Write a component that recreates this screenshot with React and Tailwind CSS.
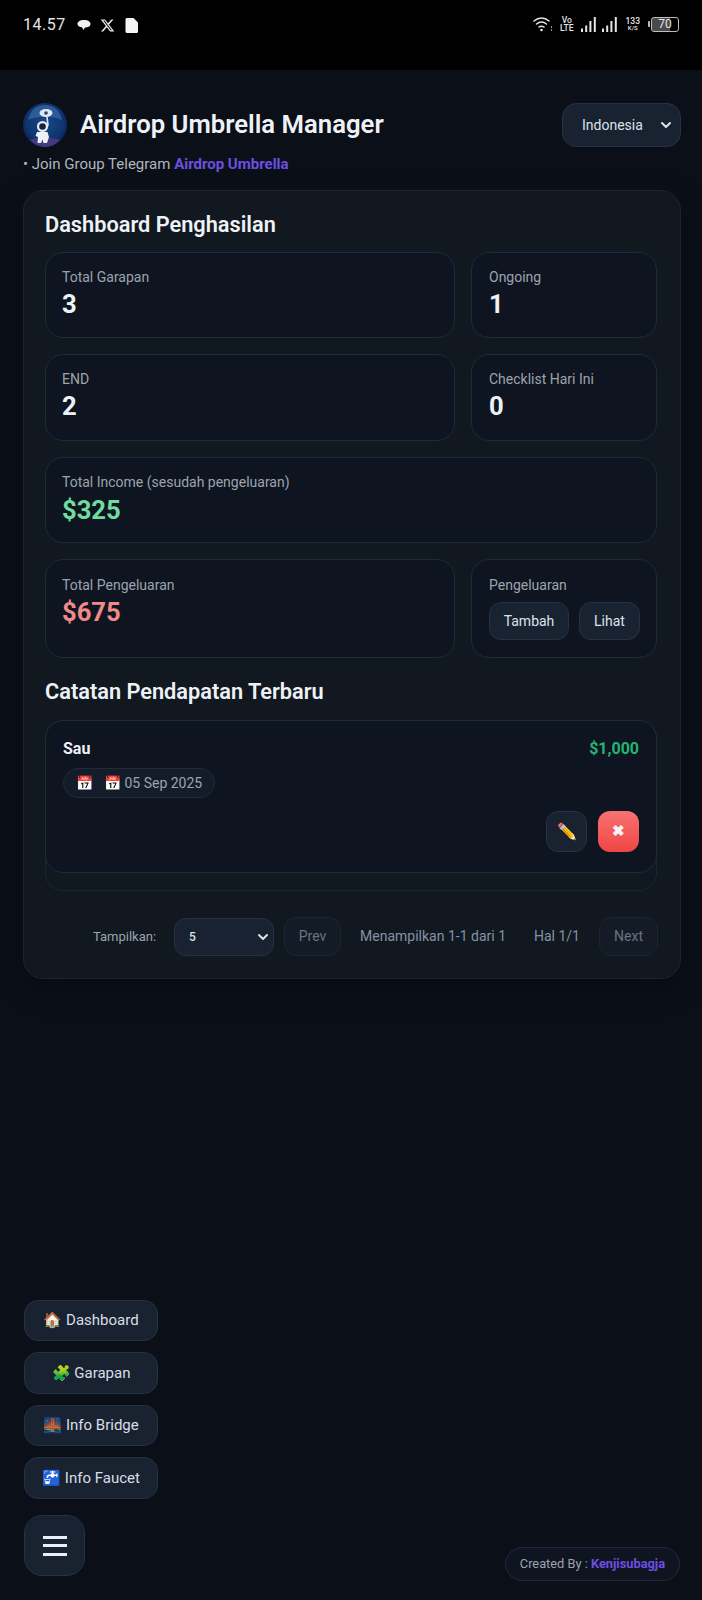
import { ChevronDown } from 'lucide-react';
import { FaXTwitter } from 'react-icons/fa6';

function StatCard({ label, value, color = 'text-[#eef2f7]', pad = 'pt-[14px]', className = '' }) {
    return (
        <div className={`rounded-[18px] border border-[#1f2a3a] bg-[#0f1520] px-[16px] ${pad} ${className}`}>
            <div className="text-[14px] leading-[20px] text-[#9ca3af]">{label}</div>
            <div className={`text-[25.6px] leading-[34px] font-bold ${color}`}>{value}</div>
        </div>
    );
}

function Wifi() {
    return (
        <svg width="20" height="16" viewBox="0 0 20 16" fill="none" stroke="#e5e5e5" strokeWidth="1.5" strokeLinecap="round">
            <path d="M1 5C5.500 1 11.500 1 16 5" />
            <path d="M3.500 8C6.500 5.600 10.500 5.600 13.500 8" />
            <path d="M6 11C7.500 10 9.500 10 11 11" />
            <circle cx="8.500" cy="14" r="1.300" fill="#e5e5e5" stroke="none" />
            <circle cx="18.500" cy="11" r="0.700" fill="#e5e5e5" stroke="none" />
            <circle cx="18.500" cy="14" r="0.700" fill="#e5e5e5" stroke="none" />
        </svg>
    );
}

function Signal({ className = '' }) {
    return (
        <svg width="15" height="15" viewBox="0 0 15 15" fill="#e5e5e5" className={className}>
            <rect x="0" y="11.500" width="2" height="3.500" />
            <rect x="4.200" y="8.500" width="2" height="6.500" />
            <rect x="8.400" y="4" width="2" height="11" />
            <rect x="12.800" y="0" width="2" height="15" />
        </svg>
    );
}

function Logo() {
    return (
        <svg width="44" height="44" viewBox="0 0 44 44" className="shrink-0">
            <defs>
                <radialGradient id="sky" cx="50%" cy="45%" r="55%">
                    <stop offset="0%" stopColor="#174789" />
                    <stop offset="75%" stopColor="#10356f" />
                    <stop offset="100%" stopColor="#0a2350" />
                </radialGradient>
            </defs>
            <circle cx="22" cy="22" r="22" fill="url(#sky)" />
            <path d="M5 17C7 7 14 2 22 2C30 2 37 7 39 17C31 12.500 13 12.500 5 17Z" fill="#4f86c6" fillOpacity="0.45" />
            <path d="M7 37C15 33.500 29 33.500 37 37C32 42 27 44 22 44C17 44 12 42 7 37Z" fill="#46387f" />
            <ellipse cx="23" cy="10" rx="6.500" ry="4" fill="#dfe8f4" />
            <circle cx="23" cy="10" r="1.800" fill="#2a3d63" />
            <path d="M24 14L25 22L22 27" fill="none" stroke="#dfe8f4" strokeWidth="1.600" />
            <circle cx="19.500" cy="23.500" r="5.500" fill="#e8edf5" />
            <circle cx="19.500" cy="23.500" r="3.300" fill="#18233f" />
            <path d="M14 29H24.500L26 34L24 40H20.500L19.500 36.500L18 40H14.500L15 34L12.500 33Z" fill="#eef1f6" />
        </svg>
    );
}

function FloatButton({ children }) {
    return (
        <button className="flex h-[41.500px] w-[134px] items-center justify-center rounded-[14px] border border-[#263244] bg-[#182230] text-[15px] text-[#d8dee8]">
            {children}
        </button>
    );
}

export default function App() {
    return (
        <div className="relative min-h-[1600px] overflow-hidden bg-[#0b0f17] font-['Roboto',sans-serif] text-[#e5e7eb]">
            {/* status bar */}
            <div className="flex h-[70px] items-start justify-between bg-black pt-[16px] pr-[23px] pl-[23px]">
                <div className="flex items-center">
                    <span className="text-[16px] leading-[18px] tracking-[0.5px] text-[#e5e5e5]">14.57</span>
                    <svg width="14" height="14" viewBox="0 0 14 14" fill="#f2f2f2" className="ml-[11px]">
                        <path d="M0.500 6C0.500 3.500 3.300 2 7 2C10.700 2 13.500 3.500 13.500 6C13.500 8.500 10.700 9.500 8 9.500L6.500 12L5 9.200C2.500 9 0.500 8 0.500 6Z" />
                    </svg>
                    <FaXTwitter size={15} color="#ececec" className="ml-[9px]" />
                    <svg width="13" height="15" viewBox="0 0 13 15" fill="#f5f5f5" className="ml-[10px]">
                        <path d="M0.500 1.500C0.500 0.700 1.100 0 2 0H8.500L13 4.500V13.500C13 14.300 12.400 15 11.500 15H2C1.100 15 0.500 14.300 0.500 13.500Z" />
                    </svg>
                </div>
                <div className="flex items-center">
                    <Wifi />
                    <div className="ml-[7px] text-center text-[8.500px] leading-[8px] font-medium text-[#e5e5e5]">
                        <div>Vo</div>
                        <div>LTE</div>
                    </div>
                    <Signal className="ml-[7px]" />
                    <Signal className="ml-[6px]" />
                    <div className="ml-[9px] text-center text-[8.500px] leading-[8px] font-medium text-[#e5e5e5]">
                        <div>133</div>
                        <div className="text-[6px] leading-[6px]">K/S</div>
                    </div>
                    <span className="ml-[8px] h-[6px] w-[2px] rounded-l-[1px] bg-[#bdbdbd]" />
                    <div className="ml-[1px] flex h-[15px] w-[28px] items-center justify-center rounded-[3px] border border-[#bdbdbd] bg-gradient-to-r from-[#4a4a4a] from-70% to-black to-70% text-[12px] leading-none text-[#e5e5e5]">
                        70
                    </div>
                </div>
            </div>

            <div className="pr-[21px] pl-[23px]">
                <div className="mt-[33px] flex items-center justify-between">
                    <div className="flex items-center gap-[13px]">
                        <Logo />
                        <h1 className="mb-[2px] text-[25.7px] font-semibold text-[#eef2f7]">Airdrop Umbrella Manager</h1>
                    </div>
                    <div className="flex h-[44px] w-[119px] items-center justify-between rounded-[14px] border border-[#263244] bg-[#182230] pr-[6px] pl-[19px] text-[14px] text-[#dbe2ea]">
                        Indonesia
                        <ChevronDown size={16} strokeWidth={3} />
                    </div>
                </div>
                <p className="mt-[7px] text-[15px] leading-[20px] text-[#b0b6c0]">
                    • Join Group Telegram <span className="font-bold text-[#6d4fe0]">Airdrop Umbrella</span>
                </p>

                <div className="mt-[16px] rounded-[20px] border border-[#1c2531] bg-[#111820] pt-[20px] pr-[22px] pb-[22px] pl-[21px] shadow-[0_10px_30px_rgba(0,0,0,0.25)]">
                    <h2 className="text-[21.76px] leading-[28px] font-semibold text-[#eef2f7]">Dashboard Penghasilan</h2>

                    <div className="mt-[13px] grid grid-cols-[410px_186px] gap-x-[16px] gap-y-[16px]">
                        <StatCard label="Total Garapan" value="3" className="h-[86px]" />
                        <StatCard label="Ongoing" value="1" className="h-[86px] pl-[17px]" />
                        <StatCard label="END" value="2" className="h-[87px]" />
                        <StatCard label="Checklist Hari Ini" value="0" className="h-[87px] pl-[17px]" />
                        <StatCard label="Total Income (sesudah pengeluaran)" value="$325" color="mt-[1px] text-[#6fdca0]" className="col-span-2 h-[86px]" />
                        <StatCard label="Total Pengeluaran" value="$675" color="text-[#f08a8a]" pad="pt-[15px]" className="h-[99px]" />
                        <div className="h-[99px] rounded-[18px] border border-[#1f2a3a] bg-[#0f1520] pt-[15px] pl-[17px]">
                            <div className="text-[14px] leading-[20px] text-[#9ca3af]">Pengeluaran</div>
                            <div className="mt-[7px] flex gap-[10px]">
                                <button className="h-[38px] w-[80px] rounded-[12px] border border-[#263244] bg-[#182230] text-[14px] text-[#dbe2ea]">Tambah</button>
                                <button className="h-[38px] w-[61px] rounded-[12px] border border-[#263244] bg-[#182230] text-[14px] text-[#dbe2ea]">Lihat</button>
                            </div>
                        </div>
                    </div>

                    <h2 className="mt-[20px] text-[21.76px] leading-[28px] font-semibold text-[#eef2f7]">Catatan Pendapatan Terbaru</h2>

                    <div className="mt-[14px] mr-[1px] rounded-[18px] border border-[#1c2531] pb-[18px]">
                        <div className="-m-px h-[153px] rounded-[18px] border border-[#1f2a3a] bg-[#0e1420] px-[17px] pt-[18px]">
                            <div className="flex items-center justify-between">
                                <span className="text-[16px] leading-[20px] font-bold text-[#eef2f7]">Sau</span>
                                <span className="text-[16px] leading-[20px] font-bold text-[#22b573]">$1,000</span>
                            </div>
                            <div className="mt-[9px] inline-flex h-[30px] items-center gap-[11px] rounded-full border border-[#1f2a3a] bg-[#141c2a] px-[12px] text-[14px] text-[#9ca3af]">
                                <span>📅</span>
                                <span>📅 05 Sep 2025</span>
                            </div>
                            <div className="mt-[13px] flex justify-end gap-[11px]">
                                <button className="h-[41px] w-[41px] rounded-[12px] border border-[#263244] bg-[#182230] text-[16px]">✏️</button>
                                <button className="h-[41px] w-[41px] rounded-[12px] bg-gradient-to-b from-[#f87171] to-[#ef4444] text-[15px] font-bold text-[#f5f5f5]">✖</button>
                            </div>
                        </div>
                    </div>

                    <div className="mt-[26px] flex items-center justify-end text-[14px] text-[#8492a6]">
                        <span className="text-[13px] text-[#9ca3af]">Tampilkan:</span>
                        <div className="ml-[18px] flex h-[38px] w-[100px] items-center justify-between rounded-[12px] border border-[#263244] bg-[#182230] pr-[2px] pl-[14px] text-[12px] font-medium text-[#dbe2ea]">
                            5
                            <ChevronDown size={16} strokeWidth={3} />
                        </div>
                        <button className="ml-[10px] h-[39px] w-[57px] rounded-[12px] border border-[#1c2531] bg-[#141b26] text-[14px] text-[#6b7280]">Prev</button>
                        <span className="ml-[19px]">Menampilkan 1-1 dari 1</span>
                        <span className="ml-[28px]">Hal 1/1</span>
                        <button className="ml-[19px] h-[39px] w-[59px] rounded-[12px] border border-[#1c2531] bg-[#141b26] text-[14px] text-[#6b7280]">Next</button>
                    </div>
                </div>
            </div>

            {/* floating menu */}
            <div className="absolute bottom-[24px] left-[24px] flex flex-col items-start gap-[11px]">
                <FloatButton>🏠 Dashboard</FloatButton>
                <FloatButton>🧩 Garapan</FloatButton>
                <FloatButton>🌉 Info Bridge</FloatButton>
                <FloatButton>🚰 Info Faucet</FloatButton>
                <button className="mt-[5.500px] flex h-[61px] w-[61px] flex-col items-center justify-center gap-[5.500px] rounded-[18px] border border-[#263244] bg-[#182230]">
                    <span className="h-[3px] w-[24px] bg-[#e8eef7]" />
                    <span className="h-[3px] w-[24px] bg-[#e8eef7]" />
                    <span className="h-[3px] w-[24px] bg-[#e8eef7]" />
                </button>
            </div>

            <div className="absolute right-[22px] bottom-[19px] flex h-[34px] items-center rounded-full border border-[#1f2a3a] bg-[#0f1520] px-[14px] text-[12.800px] text-[#9ca3af]">
                Created By :&nbsp;<span className="font-bold text-[#6d4fe0]">Kenjisubagja</span>
            </div>
        </div>
    );
}
